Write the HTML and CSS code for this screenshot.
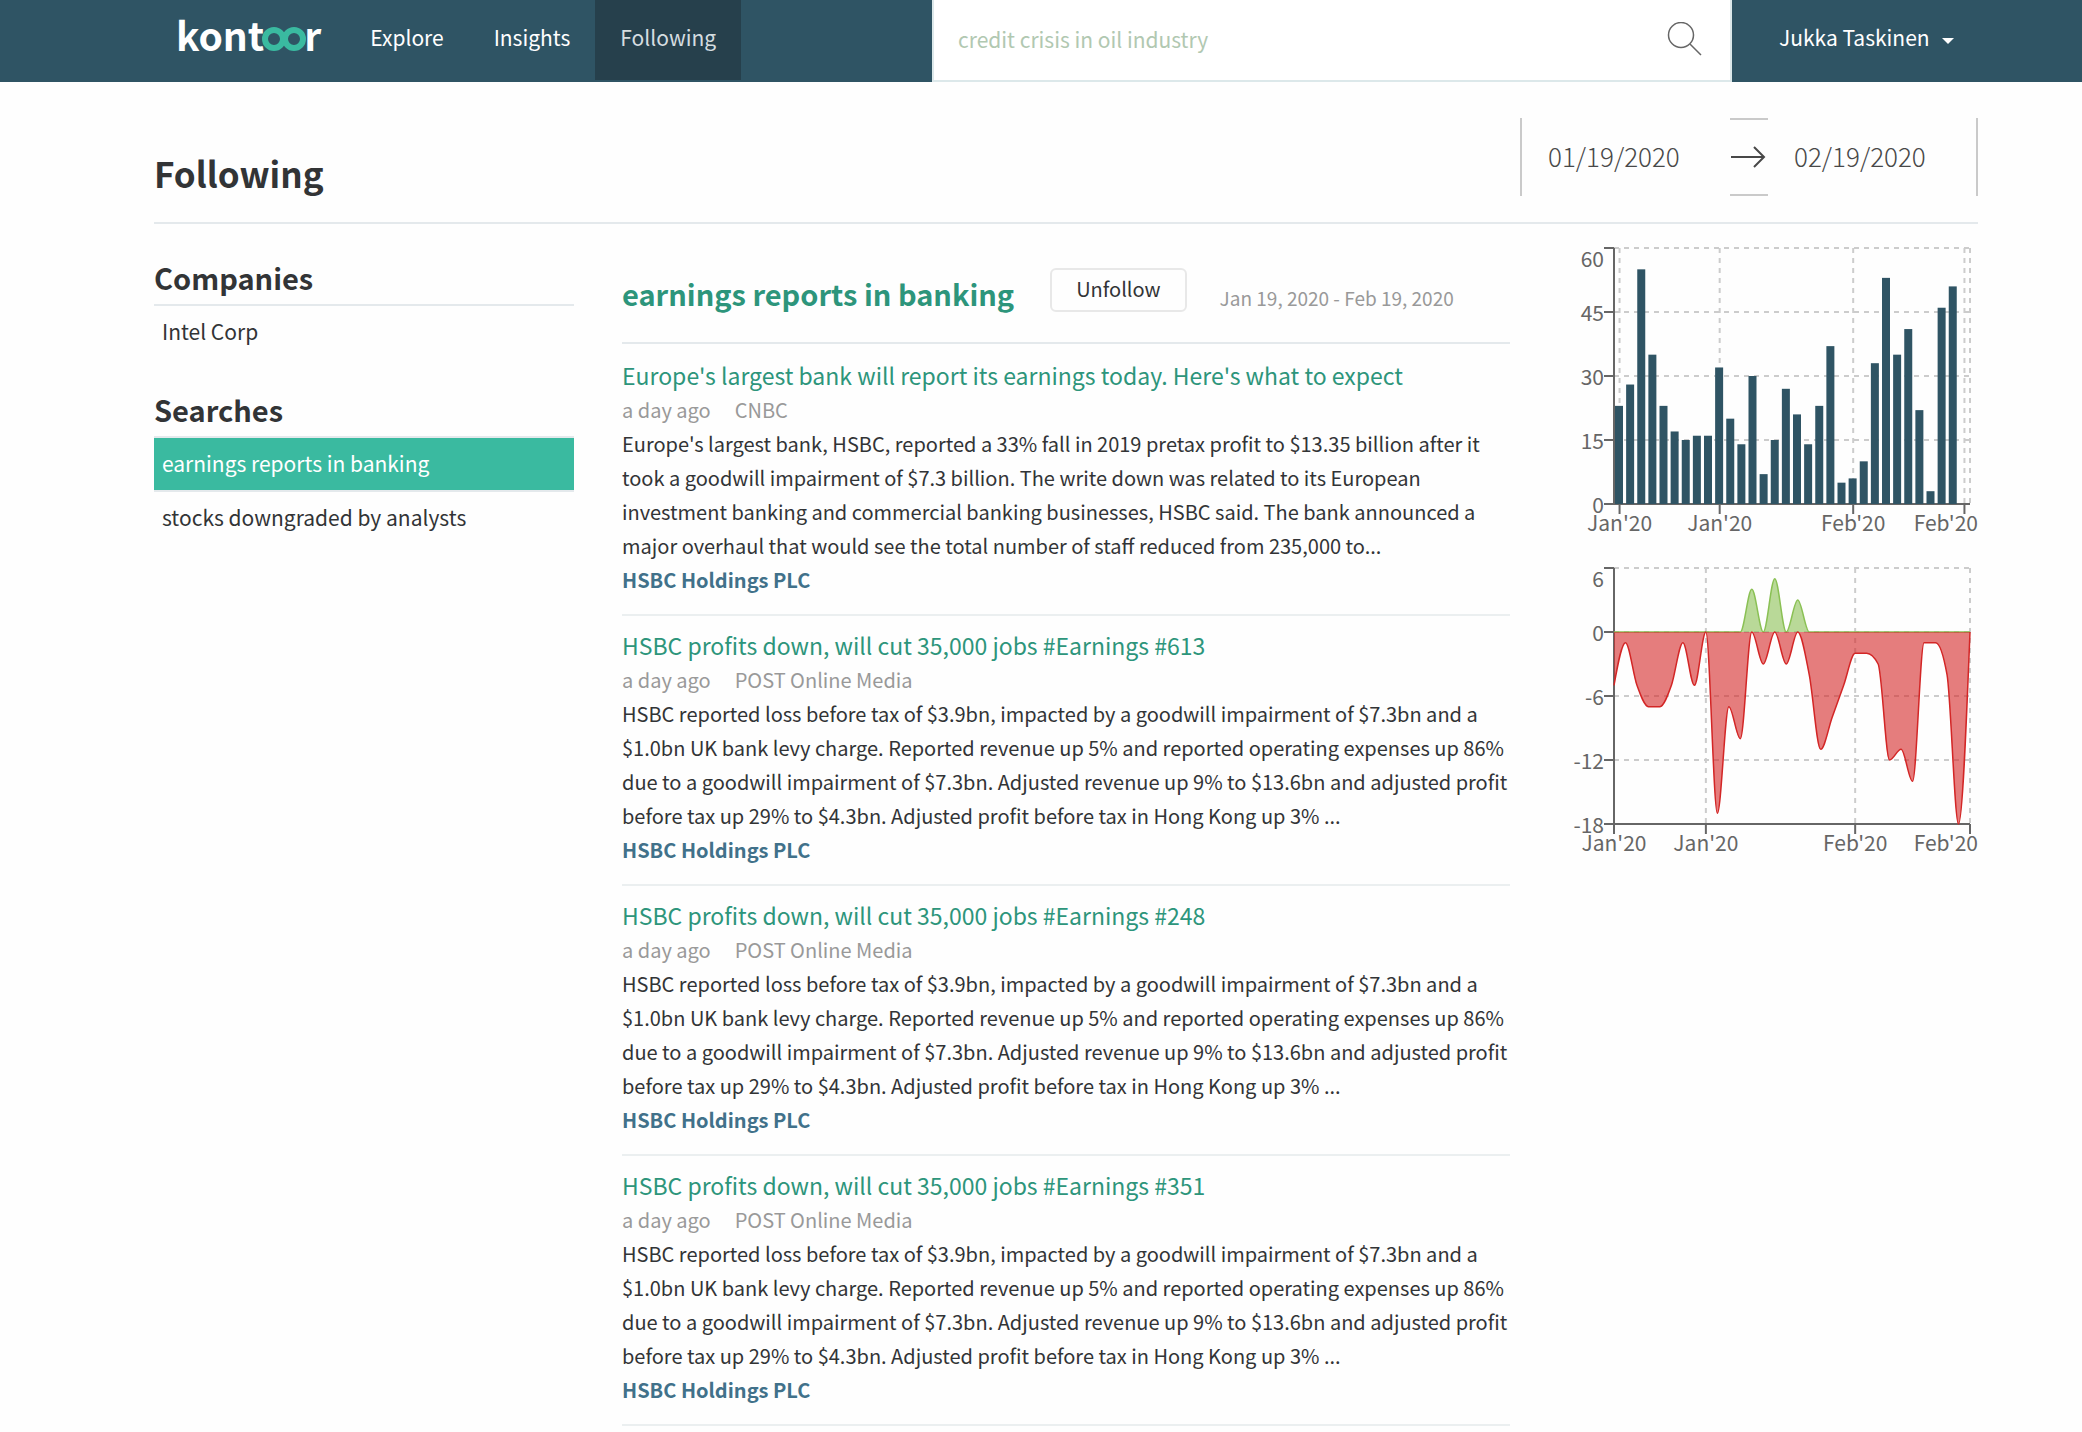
FILE: index.html
```html
<!DOCTYPE html>
<html lang="en">
<head>
<meta charset="utf-8">
<title>Following - kontoor</title>
<link rel="stylesheet" href="styles.css">
</head>
<body>
<header class="topbar">
  <nav class="nav" aria-label="Main">
    <a class="logo" href="#" aria-label="kontoor"><span>kont</span><svg class="logo-rings" viewBox="0 0 44 24" aria-hidden="true"><circle cx="12" cy="12" r="9"/><circle cx="32" cy="12" r="9"/></svg><span>r</span></a>
    <a class="nav-link" href="#">Explore</a>
    <a class="nav-link" href="#">Insights</a>
    <a class="nav-link active" href="#" aria-current="page">Following</a>
  </nav>
  <form class="search" role="search">
    <input class="search-input" type="text" aria-label="Search" placeholder="credit crisis in oil industry">
    <button class="search-button" type="button" aria-label="Search"><svg viewBox="0 0 36 36" aria-hidden="true"><circle cx="15" cy="13" r="12.5"/><path d="M24 22L35 33"/></svg></button>
  </form>
  <button class="user" type="button">Jukka Taskinen<span class="caret"></span></button>
</header>

<main class="page">
  <div class="page-head">
    <h1>Following</h1>
    <div class="range">
      <input class="date" type="text" aria-label="Start date" value="01/19/2020">
      <span class="arrow"><svg viewBox="0 0 36 24" aria-hidden="true"><path d="M1 12H34M24 2L34 12L24 22"/></svg></span>
      <input class="date" type="text" aria-label="End date" value="02/19/2020">
    </div>
  </div>

  <div class="columns">
    <aside class="sidebar">
      <h2>Companies</h2>
      <ul>
        <li><a href="#">Intel Corp</a></li>
      </ul>
      <h2>Searches</h2>
      <ul>
        <li><a class="selected" href="#">earnings reports in banking</a></li>
        <li><a href="#">stocks downgraded by analysts</a></li>
      </ul>
    </aside>

    <section class="feed">
      <div class="feed-head">
        <h2>earnings reports in banking</h2>
        <button class="unfollow" type="button">Unfollow</button>
        <span class="period">Jan 19, 2020 - Feb 19, 2020</span>
      </div>
      <article>
        <h3><a href="#">Europe's largest bank will report its earnings today. Here's what to expect</a></h3>
        <p class="meta"><span>a day ago</span><span>CNBC</span></p>
        <p>Europe's largest bank, HSBC, reported a 33% fall in 2019 pretax profit to $13.35 billion after it took a goodwill impairment of $7.3 billion. The write down was related to its European investment banking and commercial banking businesses, HSBC said. The bank announced a major overhaul that would see the total number of staff reduced from 235,000 to...</p>
        <a class="company" href="#">HSBC Holdings PLC</a>
      </article>
      <article>
        <h3><a href="#">HSBC profits down, will cut 35,000 jobs #Earnings #613</a></h3>
        <p class="meta"><span>a day ago</span><span>POST Online Media</span></p>
        <p>HSBC reported loss before tax of $3.9bn, impacted by a goodwill impairment of $7.3bn and a $1.0bn UK bank levy charge. Reported revenue up 5% and reported operating expenses up 86% due to a goodwill impairment of $7.3bn. Adjusted revenue up 9% to $13.6bn and adjusted profit before tax up 29% to $4.3bn. Adjusted profit before tax in Hong Kong up 3% ...</p>
        <a class="company" href="#">HSBC Holdings PLC</a>
      </article>
      <article>
        <h3><a href="#">HSBC profits down, will cut 35,000 jobs #Earnings #248</a></h3>
        <p class="meta"><span>a day ago</span><span>POST Online Media</span></p>
        <p>HSBC reported loss before tax of $3.9bn, impacted by a goodwill impairment of $7.3bn and a $1.0bn UK bank levy charge. Reported revenue up 5% and reported operating expenses up 86% due to a goodwill impairment of $7.3bn. Adjusted revenue up 9% to $13.6bn and adjusted profit before tax up 29% to $4.3bn. Adjusted profit before tax in Hong Kong up 3% ...</p>
        <a class="company" href="#">HSBC Holdings PLC</a>
      </article>
      <article>
        <h3><a href="#">HSBC profits down, will cut 35,000 jobs #Earnings #351</a></h3>
        <p class="meta"><span>a day ago</span><span>POST Online Media</span></p>
        <p>HSBC reported loss before tax of $3.9bn, impacted by a goodwill impairment of $7.3bn and a $1.0bn UK bank levy charge. Reported revenue up 5% and reported operating expenses up 86% due to a goodwill impairment of $7.3bn. Adjusted revenue up 9% to $13.6bn and adjusted profit before tax up 29% to $4.3bn. Adjusted profit before tax in Hong Kong up 3% ...</p>
        <a class="company" href="#">HSBC Holdings PLC</a>
      </article>
    </section>

    <aside class="charts">
      <svg id="volume" class="chart" viewBox="0 0 420 320" role="img" aria-label="Articles per day"></svg>
      <svg id="sentiment" class="chart" viewBox="0 0 420 320" role="img" aria-label="Sentiment per day"></svg>
    </aside>
  </div>
</main>
<script src="charts.js"></script>
</body>
</html>
```
FILE: styles.css
```css
* { box-sizing: border-box; }

body {
  margin: 0;
  background: #fefefe;
  color: #323436;
  font-family: "Noto Sans CJK SC", "Noto Sans", sans-serif;
  font-size: 20px;
  line-height: 34px;
}

a { color: inherit; text-decoration: none; }
h1, h2, h3, p, ul { margin: 0; padding: 0; }
ul { list-style: none; }
button, input { font: inherit; color: inherit; background: none; border: 0; padding: 0; margin: 0; }
button { cursor: pointer; }

/* Top bar */
.topbar {
  display: grid;
  grid-template-columns: minmax(0, 1fr) 800px 350px;
  height: 82px;
  background: #2f5464;
  color: #fff;
}
.nav { display: flex; align-items: flex-start; padding-left: 176px; }
.logo {
  display: flex;
  align-items: baseline;
  margin-right: 24px;
  font-size: 39px;
  font-weight: 700;
  line-height: 68px;
}
.logo-rings { width: 44px; height: 24px; margin: 0 -2px; fill: none; stroke: #3abaa0; stroke-width: 6; }
.nav-link { height: 80px; padding: 0 25px; font-size: 21px; line-height: 74px; }
.nav-link.active { background: #26404c; color: #d5dde0; }

.search {
  display: flex;
  align-items: center;
  background: #fff;
  border: solid #dce8ea;
  border-width: 0 2px 2px;
  padding: 0 28px 0 24px;
}
.search-input { flex: 1; min-width: 0; padding-bottom: 2px; font-size: 21px; color: #333; outline: 0; }
.search-input::placeholder { color: #b1c8b1; opacity: 1; }
.search-button { width: 36px; height: 36px; }
.search-button svg { display: block; fill: none; stroke: #666; stroke-width: 1.5; }

.user {
  display: flex;
  align-items: center;
  gap: 12px;
  height: 74px;
  padding-left: 47px;
  font-size: 21px;
}
.caret { margin-top: 8px; border: solid transparent; border-width: 6px 6px 0; border-top-color: #fff; }

/* Page */
.page { padding: 0 104px 0 154px; }
.page-head {
  display: flex;
  justify-content: space-between;
  align-items: flex-start;
  height: 142px;
  padding-top: 36px;
  border-bottom: 2px solid #e4e9ec;
}
h1 { font-size: 35px; font-weight: 700; line-height: 110px; }
h2 { font-size: 29px; font-weight: 700; }
.range {
  display: flex;
  align-items: center;
  width: 458px;
  height: 78px;
  border: solid #cacaca;
  border-width: 0 2px;
}
.date { flex: 1; min-width: 0; padding: 0 0 2px 26px; font-size: 26px; font-weight: 300; color: #484848; }
.arrow {
  display: flex;
  align-items: center;
  width: 38px;
  height: 78px;
  border: solid #cacaca;
  border-width: 2px 0;
}
.arrow svg { width: 36px; fill: none; stroke: #484848; stroke-width: 2; }

.columns {
  display: grid;
  grid-template-columns: 420px minmax(0, 1fr) 420px;
  column-gap: 48px;
}

.sidebar h2 {
  height: 82px;
  padding-top: 30px;
  line-height: 46px;
  border-bottom: 2px solid #e4e9ec;
}
.sidebar ul { margin-bottom: -2px; }
.sidebar a { display: block; height: 52px; padding: 0 8px; font-size: 21px; line-height: 50px; }
.sidebar li + li { border-top: 2px solid #e4e9ec; }
.sidebar .selected { background: #3abaa0; color: #fff; }

/* Feed */
.feed-head {
  display: flex;
  align-items: baseline;
  height: 120px;
  margin-bottom: 2px;
  padding-top: 40px;
  border-bottom: 2px solid #e4e9ec;
}
.feed-head h2 { color: #2d957b; line-height: 58px; }
.unfollow {
  align-self: flex-start;
  height: 44px;
  margin: 4px 33px 0 36px;
  padding: 0 24px;
  border: 2px solid #e8e8e8;
  border-radius: 6px;
  line-height: 34px;
  padding-bottom: 3px;
}
.period { font-size: 19px; color: #999; }
article { padding: 12px 0 17px; border-bottom: 2px solid #ebeff0; }
h3 { font-size: 23px; font-weight: 400; line-height: 35px; color: #2d957b; }
.meta { display: flex; gap: 24px; color: #999; }
.company { display: block; color: #41718a; font-weight: 700; }

/* Charts */
.charts { padding-top: 16px; }
.chart { display: block; width: 100%; }
.chart text { fill: #666; font-size: 21px; }
.grid { fill: none; stroke: #ccc; stroke-width: 2; stroke-dasharray: 5 5; }
.axis { fill: none; stroke: #666; stroke-width: 2; }
.bar { fill: #2f5464; }
.line { fill: none; stroke-width: 1.5; }
.pos-fill { fill: #8ac054; fill-opacity: .6; }
.pos-line { stroke: #8ac054; }
.neg-fill { fill: #d32626; fill-opacity: .6; }
.neg-line { stroke: #d32626; }
```
FILE: charts.js
```js
const NS = 'http://www.w3.org/2000/svg';
const LEFT = 56, RIGHT = 412, TOP = 8, BOTTOM = 264;
const WIDTH = RIGHT - LEFT, HEIGHT = BOTTOM - TOP;

function add(svg, tag, attrs, text) {
  const el = document.createElementNS(NS, tag);
  for (const key in attrs) el.setAttribute(key, attrs[key]);
  if (text !== undefined) el.textContent = text;
  svg.appendChild(el);
}

function drawGrid(svg, xs, count) {
  for (let i = 0; i < count; i++) {
    const y = TOP + HEIGHT * i / (count - 1);
    add(svg, 'path', { class: 'grid', d: `M${LEFT} ${y}H${RIGHT}` });
  }
  for (const x of xs.concat(LEFT, RIGHT)) {
    add(svg, 'path', { class: 'grid', d: `M${x} ${TOP}V${BOTTOM}` });
  }
}

function drawAxes(svg, xs, yLabels) {
  add(svg, 'path', { class: 'axis', d: `M${LEFT} ${TOP}V${BOTTOM}H${RIGHT}` });
  yLabels.forEach((label, i) => {
    const y = TOP + HEIGHT * i / (yLabels.length - 1);
    add(svg, 'path', { class: 'axis', d: `M${LEFT - 10} ${y}H${LEFT}` });
    add(svg, 'text', { x: LEFT - 10, y: y + (i ? 9 : 19), 'text-anchor': 'end' }, label);
  });
  const names = ["Jan'20", "Jan'20", "Feb'20", "Feb'20"];
  xs.forEach((x, i) => {
    add(svg, 'path', { class: 'axis', d: `M${x} ${BOTTOM}v10` });
    const last = i === xs.length - 1;
    add(svg, 'text', { x: last ? 420 : x, y: BOTTOM + 27, 'text-anchor': last ? 'end' : 'middle' }, names[i]);
  });
}

// Monotone cubic interpolation through evenly spaced points.
function monotone(points) {
  const n = points.length, h = points[1][0] - points[0][0];
  const s = [];
  for (let i = 0; i < n - 1; i++) s.push((points[i + 1][1] - points[i][1]) / h);
  const t = [];
  for (let i = 1; i < n - 1; i++) {
    const a = s[i - 1], b = s[i];
    t[i] = (Math.sign(a) + Math.sign(b)) * Math.min(Math.abs(a), Math.abs(b), Math.abs(a + b) / 4) || 0;
  }
  t[0] = (3 * s[0] - t[1]) / 2;
  t[n - 1] = (3 * s[n - 2] - t[n - 2]) / 2;
  let d = `M${points[0]}`;
  for (let i = 0; i < n - 1; i++) {
    const [x0, y0] = points[i], [x1, y1] = points[i + 1];
    d += `C${x0 + h / 3},${y0 + t[i] * h / 3} ${x1 - h / 3},${y1 - t[i + 1] * h / 3} ${x1},${y1}`;
  }
  return d;
}

const volume = [23, 28, 55, 35, 23, 17, 15, 16, 16, 32, 20, 14, 30, 7, 15, 27, 21, 14, 23, 37,
  5, 6, 10, 33, 53, 35, 41, 22, 3, 46, 51, 0];
const negative = [-5, -1, -5, -7, -7, -5, -1, -5, 0, -17, -7, -10, 0, -3, 0, -3, 0, -4, -11, -8,
  -5, -2, -2, -3, -12, -11, -14, -1, -1, -4, -18, 0];
const positive = negative.map((_, i) => ({ 12: 4, 14: 5, 16: 3 })[i] || 0);

const bars = document.getElementById('volume');
const band = WIDTH / volume.length;
const barTicks = [0, 9, 21, 31].map(i => LEFT + band * (i + .5));
drawGrid(bars, barTicks, 5);
drawAxes(bars, barTicks, [60, 45, 30, 15, 0]);
volume.forEach((v, i) => {
  const h = HEIGHT * v / 60;
  add(bars, 'rect', { class: 'bar', x: LEFT + 1 + band * i, y: BOTTOM - h, width: 8, height: h });
});

const area = document.getElementById('sentiment');
const step = WIDTH / (negative.length - 1);
const zero = TOP + HEIGHT / 4;
const areaTicks = [0, 8, 21, 31].map(i => LEFT + step * i);
drawGrid(area, areaTicks.slice(1, 3), 5);
drawAxes(area, areaTicks, [6, 0, -6, -12, -18]);
for (const [name, data] of [['pos', positive], ['neg', negative]]) {
  const d = monotone(data.map((v, i) => [LEFT + step * i, zero - HEIGHT * v / 24]));
  add(area, 'path', { class: `${name}-fill`, d: `${d}V${zero}H${LEFT}Z` });
  add(area, 'path', { class: `line ${name}-line`, d });
}
```
